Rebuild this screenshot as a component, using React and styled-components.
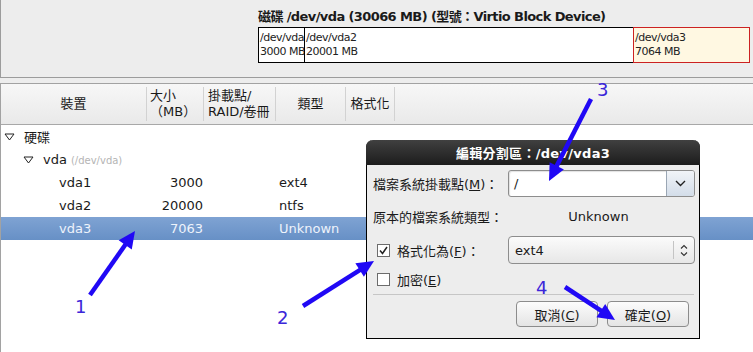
import React from "react";
import styled, { createGlobalStyle } from "styled-components";

const GlobalStyle = createGlobalStyle`
  html, body {
    margin: 0;
    padding: 0;
    background: #ededed;
  }
  body {
    font-family: "DejaVu Sans", "Noto Sans CJK TC", sans-serif;
    font-size: 13px;
    color: #1a1a1a;
  }
`;

const FONT = `"DejaVu Sans", "Noto Sans CJK TC", sans-serif`;

const Page = styled.div`
  position: relative;
  width: 753px;
  height: 352px;
  overflow: hidden;
  display: flex;
  flex-direction: column;
  background: #ededed;
  font-family: ${FONT};
`;

// ---- disk overview ----
const TopPanel = styled.div`
  box-sizing: border-box;
  height: 78px;
  flex: none;
  padding: 9px 0 0 257px;
  border-left: 1px solid #9c9c9c;
  border-bottom: 1px solid #9c9c9c;
`;

const DiskTitle = styled.div`
  font-weight: bold;
  font-size: 13px;
  line-height: 16px;
  height: 17px;
  white-space: nowrap;
  letter-spacing: -0.6px;
`;

const Bar = styled.div`
  display: flex;
  width: 492px;
  height: 36px;
  margin-top: 1px;
`;

const Seg = styled.div`
  box-sizing: border-box;
  width: ${(p) => p.$w}px;
  border: 1px solid ${(p) => (p.$selected ? "#cc2222" : "#000")};
  margin-left: ${(p) => (p.$first ? 0 : -1)}px;
  background: ${(p) => (p.$selected ? "#fff8e2" : "#fff")};
  padding: 3px 0 0 1px;
  font-size: 11px;
  line-height: 14px;
  letter-spacing: -0.5px;
  white-space: nowrap;
  overflow: hidden;
  color: #222;
  position: relative;
  z-index: ${(p) => (p.$selected ? 1 : 0)};
`;

// ---- partition table ----
const Table = styled.div`
  flex: 1;
  margin-top: 5px;
  background: #fff;
  border-top: 1px solid #a2a2a2;
  border-left: 1px solid #a2a2a2;
  display: flex;
  flex-direction: column;
`;

const Header = styled.div`
  display: flex;
  height: 41px;
  box-sizing: border-box;
  background: linear-gradient(#f7f7f7, #e9e9e9);
  border-bottom: 1px solid #a8a8a8;
`;

const HeadCell = styled.div`
  box-sizing: border-box;
  width: ${(p) => p.$w}px;
  margin: 3px 0;
  border-right: ${(p) => (p.$last ? "none" : "1px solid #d2d2d2")};
  display: flex;
  align-items: center;
  justify-content: ${(p) => p.$align || "center"};
  padding-left: ${(p) => p.$pl || 0}px;
  font-size: 13px;
  line-height: 16px;
  white-space: pre;
`;

const Row = styled.div`
  display: flex;
  align-items: center;
  height: 23px;
  color: ${(p) => (p.$selected ? "#eef3fb" : "#1a1a1a")};
  background: ${(p) =>
    p.$selected ? "linear-gradient(#7fa3d3, #6790c6)" : "transparent"};
`;

const NameCell = styled.div`
  width: 146px;
  box-sizing: border-box;
  padding-left: ${(p) => p.$indent}px;
  display: flex;
  align-items: center;
  gap: ${(p) => p.$gap || 0}px;
  white-space: nowrap;
`;

const SizeCell = styled.div`
  width: 56px;
  text-align: right;
`;

const MountCell = styled.div`
  width: 76px;
`;

const TypeCell = styled.div`
  width: 80px;
`;

const Dim = styled.span`
  color: #b4b4b4;
  font-size: 10px;
  margin-left: 4px;
`;

const Expander = () => (
  <svg width="11" height="8" viewBox="0 0 11 8">
    <path d="M1 1 L10 1 L5.5 7 Z" fill="none" stroke="#222" strokeWidth="1" />
  </svg>
);

// ---- dialog ----
const Dialog = styled.div`
  position: absolute;
  left: 366px;
  top: 140px;
  width: 334px;
  height: 199px;
  box-sizing: border-box;
  border: 1px solid #000;
  border-top: none;
  border-radius: 7px 7px 0 0;
  background: #ededed;
  display: flex;
  flex-direction: column;
`;

const TitleBar = styled.div`
  height: 25px;
  flex: none;
  margin: 0 -1px;
  border-radius: 7px 7px 0 0;
  background: linear-gradient(#404040, #1c1c1c);
  color: #fff;
  font-weight: bold;
  font-size: 13px;
  display: flex;
  align-items: center;
  justify-content: center;
  letter-spacing: 0.3px;
`;

const Form = styled.div`
  display: grid;
  grid-template-columns: 135px 187px;
  grid-template-rows: 28px 39px 28px 30px;
  align-items: center;
  padding: 4px 0 0 6px;
`;

const Label = styled.div`
  display: flex;
  align-items: center;
  gap: 7px;
  white-space: nowrap;
  padding-left: ${(p) => p.$pl || 0}px;
`;

const Key = styled.span`
  text-decoration: underline;
`;

const Combo = styled.div`
  display: flex;
  height: 27px;
  box-sizing: border-box;
  border: 1px solid #8d8d8d;
  border-radius: 3px;
  background: #fff;
  overflow: hidden;
  box-shadow: inset 1px 1px 1px rgba(0, 0, 0, 0.12);
`;

const ComboText = styled.div`
  flex: 1;
  padding-left: 5px;
  display: flex;
  align-items: center;
`;

const ComboButton = styled.div`
  width: 27px;
  border-left: 1px solid #9aa6b4;
  background: linear-gradient(#f1f4f8, #d3dde9);
  display: flex;
  align-items: center;
  justify-content: center;
`;

const Value = styled.div`
  text-align: center;
  padding-right: 6px;
`;

const Select = styled.div`
  display: flex;
  height: 28px;
  box-sizing: border-box;
  border: 1px solid #8d8d8d;
  border-radius: 4px;
  background: linear-gradient(#fbfbfb, #e7e7e7);
`;

const SelectText = styled.div`
  flex: 1;
  padding-left: 6px;
  display: flex;
  align-items: center;
`;

const SelectArrows = styled.div`
  width: 20px;
  margin: 4px 0;
  border-left: 1px solid #c4c4c4;
  display: flex;
  align-items: center;
  justify-content: center;
`;

const Check = styled.span`
  box-sizing: border-box;
  width: 13px;
  height: 13px;
  border: 1px solid #6c6c6c;
  background: #fff;
  display: inline-flex;
  align-items: center;
  justify-content: center;
`;

const Divider = styled.div`
  margin: 0 5px 0 6px;
  border-top: 1px solid #c6c6c6;
`;

const Buttons = styled.div`
  display: flex;
  justify-content: flex-end;
  gap: 9px;
  padding: 6px 10px 0 0;
`;

const Button = styled.div`
  width: 82px;
  height: 26px;
  box-sizing: border-box;
  border: 1px solid #8c8c8c;
  border-radius: 4px;
  background: linear-gradient(#fcfcfc, #e4e4e4);
  display: flex;
  align-items: center;
  justify-content: center;
`;

// ---- annotations ----
const Overlay = styled.svg`
  position: absolute;
  left: 0;
  top: 0;
  pointer-events: none;
`;

const Num = styled.text`
  font-family: ${FONT};
  font-size: 18px;
  fill: #3b26d9;
`;

const Arrow = ({ x1, y1, x2, y2 }) => {
  const dx = x2 - x1;
  const dy = y2 - y1;
  const len = Math.hypot(dx, dy);
  const ux = dx / len;
  const uy = dy / len;
  const hl = 17;
  const hw = 8;
  const bx = x2 - ux * hl;
  const by = y2 - uy * hl;
  const head = [
    `${x2},${y2}`,
    `${bx - uy * hw},${by + ux * hw}`,
    `${bx + uy * hw},${by - ux * hw}`,
  ].join(" ");
  return (
    <g>
      <line
        x1={x1}
        y1={y1}
        x2={bx + ux * 2}
        y2={by + uy * 2}
        stroke="#2008f5"
        strokeWidth="4.5"
      />
      <polygon points={head} fill="#2008f5" />
    </g>
  );
};

const rows = [
  { name: "vda1", size: "3000", type: "ext4" },
  { name: "vda2", size: "20000", type: "ntfs" },
  { name: "vda3", size: "7063", type: "Unknown", selected: true },
];

export default function App() {
  return (
    <>
      <GlobalStyle />
      <Page>
        <TopPanel>
          <DiskTitle>磁碟 /dev/vda (30066 MB) (型號：Virtio Block Device)</DiskTitle>
          <Bar>
            <Seg $w={47} $first>
              /dev/vda
              <br />
              3000 MB
            </Seg>
            <Seg $w={330}>
              /dev/vda2
              <br />
              20001 MB
            </Seg>
            <Seg $w={117} $selected>
              /dev/vda3
              <br />
              7064 MB
            </Seg>
          </Bar>
        </TopPanel>

        <Table>
          <Header>
            <HeadCell $w={146}>裝置</HeadCell>
            <HeadCell $w={57} $align="flex-start" $pl={3}>
              {"大小\n（MB）"}
            </HeadCell>
            <HeadCell $w={72} $align="flex-start" $pl={4}>
              {"掛載點/\nRAID/卷冊"}
            </HeadCell>
            <HeadCell $w={70}>類型</HeadCell>
            <HeadCell $w={49}>格式化</HeadCell>
            <HeadCell $w={358} $last />
          </Header>

          <Row>
            <NameCell $indent={3} $gap={9}>
              <Expander />
              硬碟
            </NameCell>
          </Row>
          <Row>
            <NameCell $indent={22} $gap={9}>
              <Expander />
              <span>
                vda<Dim>(/dev/vda)</Dim>
              </span>
            </NameCell>
          </Row>
          {rows.map((r) => (
            <Row key={r.name} $selected={r.selected}>
              <NameCell $indent={58}>{r.name}</NameCell>
              <SizeCell>{r.size}</SizeCell>
              <MountCell />
              <TypeCell>{r.type}</TypeCell>
            </Row>
          ))}
        </Table>

        <Dialog>
          <TitleBar>編輯分割區：/dev/vda3</TitleBar>
          <Form>
            <Label>
              <span>
                檔案系統掛載點(<Key>M</Key>)：
              </span>
            </Label>
            <Combo>
              <ComboText>/</ComboText>
              <ComboButton>
                <svg width="11" height="7" viewBox="0 0 11 7">
                  <path d="M1 1 L5.5 5.5 L10 1" fill="none" stroke="#222" strokeWidth="1.4" />
                </svg>
              </ComboButton>
            </Combo>

            <Label>原本的檔案系統類型：</Label>
            <Value>Unknown</Value>

            <Label $pl={4}>
              <Check>
                <svg width="9" height="9" viewBox="0 0 9 9">
                  <path d="M1 4.5 L3.5 7.5 L8 1" fill="none" stroke="#222" strokeWidth="1.5" />
                </svg>
              </Check>
              <span>
                格式化為(<Key>F</Key>)：
              </span>
            </Label>
            <Select>
              <SelectText>ext4</SelectText>
              <SelectArrows>
                <svg width="8" height="13" viewBox="0 0 8 13">
                  <path d="M1 4.5 L4 1.5 L7 4.5 M1 8.5 L4 11.5 L7 8.5" fill="none" stroke="#333" strokeWidth="1.1" />
                </svg>
              </SelectArrows>
            </Select>

            <Label $pl={4}>
              <Check />
              <span>
                加密(<Key>E</Key>)
              </span>
            </Label>
            <div />
          </Form>
          <Divider />
          <Buttons>
            <Button>
              <span>
                取消(<Key>C</Key>)
              </span>
            </Button>
            <Button>
              <span>
                確定(<Key>O</Key>)
              </span>
            </Button>
          </Buttons>
        </Dialog>

        <Overlay width="753" height="352" viewBox="0 0 753 352">
          <Arrow x1={90} y1={295} x2={135} y2={231} />
          <Arrow x1={303} y1={306} x2={374} y2={261} />
          <Arrow x1={591} y1={99} x2={549} y2={181} />
          <Arrow x1={565} y1={287} x2={615} y2={320} />
          <Num x="75" y="313">1</Num>
          <Num x="277" y="324">2</Num>
          <Num x="597" y="96">3</Num>
          <Num x="536" y="294">4</Num>
        </Overlay>
      </Page>
    </>
  );
}
